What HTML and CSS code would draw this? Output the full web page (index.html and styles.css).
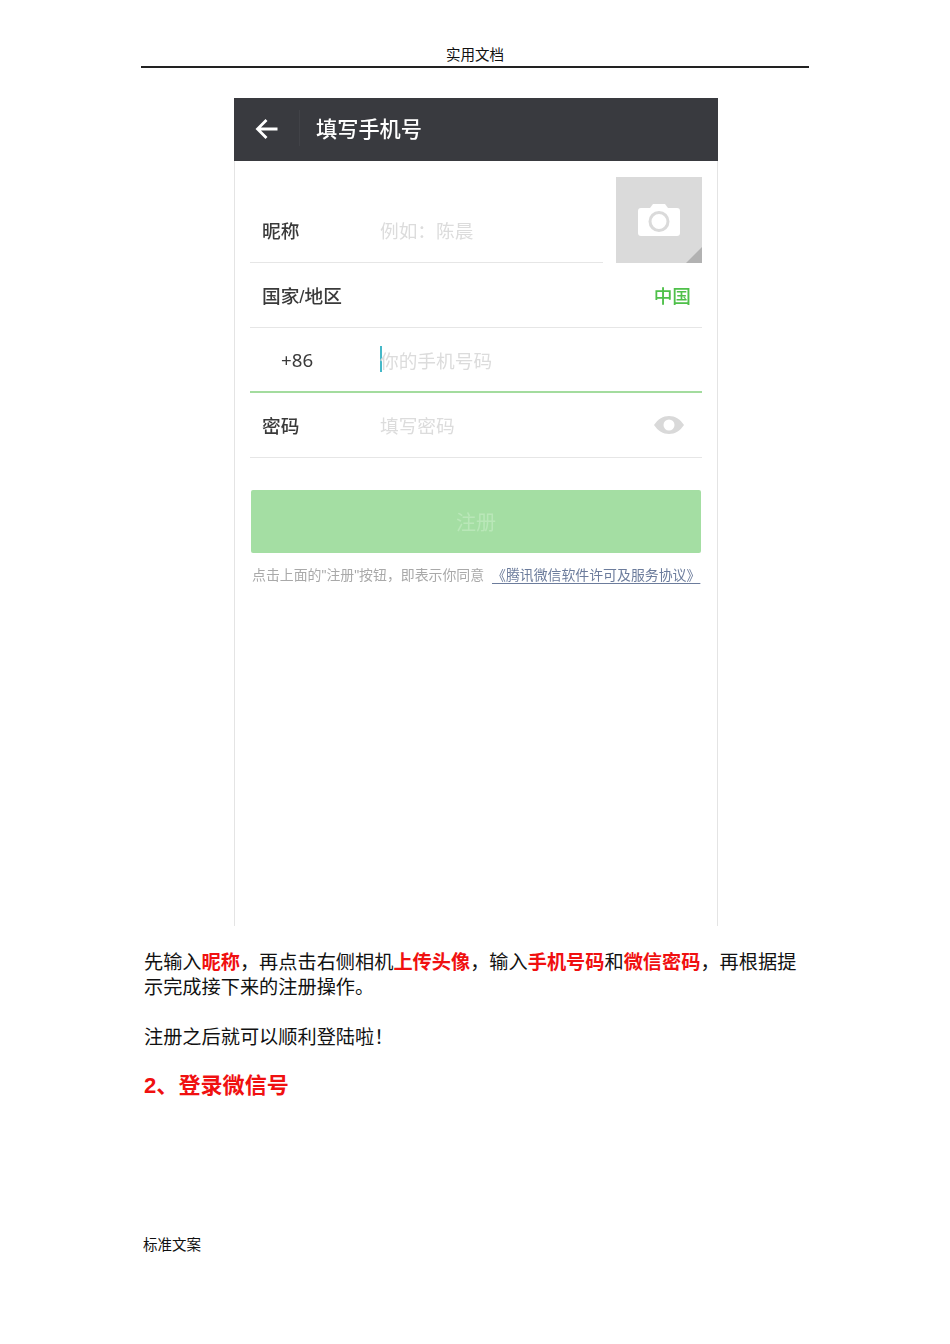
FILE: index.html
```html
<!DOCTYPE html>
<html lang="zh-CN">

<head>
    <meta charset="UTF-8">
    <title>实用文档</title>
    <link rel="stylesheet" href="styles.css">
</head>

<body>
    <div class="page">
        <div class="page_head">实用文档</div>

        <div class="phone">
            <div class="topbar">
                <svg class="back" width="24" height="22" viewBox="0 0 24 22">
                    <path d="M22.5 11H3M11.500 2 2.500 11l9 9" fill="none" stroke="#fff" stroke-width="2.800"/>
                </svg>
                <span class="topbar_line"></span>
                <span class="topbar_title">填写手机号</span>
            </div>

            <div class="form">
                <div class="name_row">
                    <div class="row name_field">
                        <span class="label">昵称</span>
                        <span class="hint">例如：陈晨</span>
                    </div>
                    <div class="avatar">
                        <svg width="42" height="32" viewBox="0 0 42 32">
                            <path d="M3 4h9l3-4h12l3 4h9a3 3 0 0 1 3 3v22a3 3 0 0 1-3 3H3a3 3 0 0 1-3-3V7a3 3 0 0 1 3-3z" fill="#fff"/>
                            <circle cx="21" cy="17.500" r="9" fill="none" stroke="#dadada" stroke-width="3"/>
                        </svg>
                        <span class="avatar_corner"></span>
                    </div>
                </div>

                <div class="row">
                    <span class="label">国家/地区</span>
                    <span class="country">中国</span>
                </div>

                <div class="row row_active">
                    <span class="code">+86</span>
                    <span class="caret"></span>
                    <span class="hint">你的手机号码</span>
                </div>

                <div class="row">
                    <span class="label">密码</span>
                    <span class="hint">填写密码</span>
                    <svg class="eye" width="32" height="20" viewBox="0 0 32 20">
                        <path d="M1 10C5 4 10 1 16 1s11 3 15 9c-4 6-9 9-15 9S5 16 1 10z" fill="#d9d9d9"/>
                        <circle cx="16" cy="10" r="5.500" fill="#fff"/>
                    </svg>
                </div>

                <div class="submit">注册</div>
                <div class="terms">点击上面的"注册"按钮，即表示你同意 <a>《腾讯微信软件许可及服务协议》</a></div>
            </div>
        </div>

        <div class="article">
            <p class="para">先输入<b>昵称</b>，再点击右侧相机<b>上传头像</b>，输入<b>手机号码</b>和<b>微信密码</b>，再根据提示完成接下来的注册操作。</p>
            <p class="para">注册之后就可以顺利登陆啦！</p>
            <h2 class="step">2、登录微信号</h2>
        </div>

        <div class="page_foot">标准文案</div>
    </div>
</body>

</html>
```

FILE: styles.css
```css
* {
    box-sizing: border-box;
}

body {
    margin: 0;
    background: #fff;
    color: #111;
    font-family: "Liberation Sans", "Noto Sans CJK SC", sans-serif;
    text-spacing-trim: space-all;
}

.page {
    width: 668px;
    height: 1344px;
    margin-left: 141px;
    padding-top: 45px;
}

.page_head {
    height: 23px;
    border-bottom: 2px solid #222;
    text-align: center;
    font-size: 14.500px;
    line-height: 20px;
}

.phone {
    width: 484px;
    height: 828px;
    margin: 30px 0 0 93px;
    border-left: 1px solid #e4e4e4;
    border-right: 1px solid #e4e4e4;
    filter: blur(0.4px);
}

.topbar {
    display: flex;
    align-items: center;
    height: 63px;
    margin: 0 -1px;
    padding: 0 0 4px 21px;
    background: #393a3f;
    color: #fff;
}

.back {
    margin-top: 3px;
}

.topbar_line {
    width: 1px;
    height: 36px;
    margin: 0 16px 0 20px;
    background: #414247;
}

.topbar_title {
    font-size: 21.200px;
    font-weight: 500;
}

.form {
    padding: 16px 15px 0;
}

.name_row {
    display: flex;
    justify-content: space-between;
    align-items: flex-end;
}

.row {
    display: flex;
    align-items: center;
    height: 65px;
    padding: 0 11px 2px 12px;
    border-bottom: 1px solid #e6e6e6;
    font-size: 18.700px;
    color: #3a3a3a;
}

.name_field {
    width: 353px;
}

.label {
    width: 118px;
    flex: none;
    font-weight: 500;
}

.hint {
    color: #dcdcdc;
}

.avatar {
    display: flex;
    align-items: center;
    justify-content: center;
    position: relative;
    width: 86px;
    height: 86px;
    background: #dadada;
}

.avatar_corner {
    position: absolute;
    right: 0;
    bottom: 0;
    border-style: solid;
    border-width: 8px;
    border-color: transparent #b2b2b2 #b2b2b2 transparent;
}

.country {
    margin-left: auto;
    font-weight: 500;
    color: #4fc04a;
}

.row_active {
    padding-bottom: 1px;
    border-bottom: 2px solid #a3dc9e;
}

.code {
    width: 118px;
    padding-left: 19px;
    flex: none;
    font-family: "Noto Sans", sans-serif;
    font-size: 18.700px;
}

.caret {
    width: 2px;
    height: 26px;
    margin-right: -2px;
    background: #45b8c8;
}

.eye {
    margin-left: auto;
    margin-right: 6px;
    margin-top: 2px;
}

.submit {
    height: 63px;
    margin: 32px 1px 0;
    border-radius: 2px;
    background: #a4dea3;
    color: #b9e7b8;
    text-align: center;
    font-size: 20px;
    line-height: 66px;
}

.terms {
    margin-top: 12px;
    padding-left: 2px;
    font-size: 13.900px;
    line-height: 20px;
    white-space: nowrap;
    color: #a9a9a9;
}

.terms a {
    margin-left: 4px;
    font-size: 13.900px;
    color: #6c7c9c;
    text-decoration: underline;
    text-underline-offset: 3px;
}

.article {
    padding: 24px 0 0 3px;
}

.para {
    margin: 0 0 25px;
    font-size: 19.200px;
    line-height: 25px;
}

.para + .para {
    margin-bottom: 23px;
}

.para b {
    color: #f01010;
}

.step {
    margin: 0;
    color: #f01010;
    font-size: 22.100px;
    line-height: 26px;
}

.page_foot {
    margin-top: 136px;
    padding-left: 2px;
    font-size: 14.500px;
    line-height: 20px;
}
```
